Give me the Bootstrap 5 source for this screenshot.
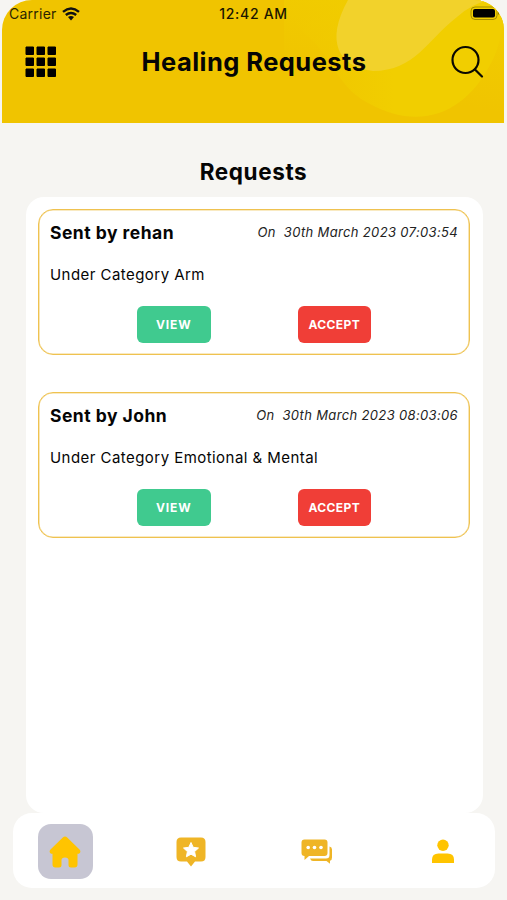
<!DOCTYPE html>
<html lang="en">
<head>
<meta charset="utf-8">
<meta name="viewport" content="width=device-width, initial-scale=1">
<title>Healing Requests</title>
<link href="https://cdn.jsdelivr.net/npm/bootstrap@5.3.0/dist/css/bootstrap.min.css" rel="stylesheet">
<style>
body{background:#f6f5f2;font-family:Inter,"Liberation Sans",sans-serif;color:#050505}
svg{display:block;flex:none}
.phone{width:507px;height:900px}
.app-header{height:123px;margin:0 3px 0 2px;background:#f0c400;border-radius:30px 30px 0 0}
.header-art{inset:0}
.status{height:27px;font-size:14px;padding:0 0 0 7px}
.status-side{width:120px;gap:5px}
.status-end{width:126px}
.carrier{font-size:14px;letter-spacing:.25px;color:#2b2400}
.clock{font-weight:500;letter-spacing:.7px;font-size:14px;color:#1a1600}
.title-bar{height:70px;padding:0 20px 0 23px}
.app-title{font-size:25.5px;font-weight:700;letter-spacing:.45px;line-height:30px}
.section-title{font-size:22.5px;font-weight:700;line-height:30px;letter-spacing:.6px;margin-top:34px;margin-bottom:10px}
.panel{margin:0 24px 0 26px;height:616px;border-radius:18px;padding:12px 13px 0 12px;gap:37px;background:#fff}
.request{height:146px;border:1px solid #efc250;box-shadow:inset 0 0 0 .6px #f3d585;border-radius:15px;padding:8px 11px 0 11px;background:#fff}
.sender{font-size:17.5px;font-weight:700;line-height:29px;letter-spacing:.48px}
.when{font-size:13px;font-style:italic;line-height:28px;white-space:pre;color:#222;letter-spacing:.35px}
.category{font-size:15px;line-height:24px;margin-top:16px;letter-spacing:.45px}
.actions{margin-top:19px;gap:87px;padding-left:87px}
.action{width:73.5px;height:37px;border-radius:6px;border:0;padding:0;font-size:12px;font-weight:700;color:#fff;letter-spacing:.4px}
.view{background:#40ca8f;letter-spacing:.8px}.accept{background:#f03e37}
.tabs{height:75px;margin:0 12px 0 13px;border-radius:19px;background:#fff;padding:2px 25px 0;gap:71px}
.tab{width:55px;height:55px}
.tab-home{border-radius:13px;background:#c7c6d3}
</style>
</head>
<body>
<div class="phone d-flex flex-column overflow-hidden">
<header class="app-header position-relative overflow-hidden">
<svg class="header-art position-absolute" width="502" height="123" viewBox="2 0 502 123">
<defs>
<linearGradient id="base" x1=".6" y1="1" x2="1" y2="0"><stop offset=".2" stop-color="#f0c400"/><stop offset="1" stop-color="#f1cf00"/></linearGradient>
<linearGradient id="disc" x1="0" y1="0" x2=".5" y2="0"><stop offset="0" stop-color="#f0c900" stop-opacity=".2"/><stop offset="1" stop-color="#f1ce00"/></linearGradient>
</defs>
<path d="M284 0H504V123H284Z" fill="url(#base)"/>
<path d="M284 0C289 25 309 33 324 54C340 77 346 91 368 103C424 134 467 109 490 65C505 41 504 0 504 0Z" fill="url(#disc)"/>
<path d="M348 0C325 41 338 67 373 71C415 71 427 40 457 17Q471 4 490 0Z" fill="#f2d22b"/>
</svg>
<div class="status position-relative d-flex justify-content-between align-items-center">
<div class="status-side d-flex align-items-center carrier"><span>Carrier</span>
<svg width="18" height="14" viewBox="0 0 18 14"><g fill="none" stroke="#111" stroke-width="2.4"><path d="M1 4.8Q9-2 17 4.8M3.8 8Q9 3.8 14.2 8"/></g><path d="M6 10Q9 8 12 10L9 13.4Z" fill="#111"/></svg></div>
<span class="clock">12:42 AM</span>
<div class="status-end d-flex justify-content-end pe-1"><svg width="30" height="15" viewBox="0 0 30 15"><rect x="1" y="1" width="26" height="12.5" rx="4" fill="none" stroke="#a48d00"/><rect x="3" y="3" width="22" height="8.5" rx="2"/><path d="M28 5Q30.500 7 28 9Z" fill="#887500"/></svg></div>
</div>
<div class="title-bar position-relative d-flex justify-content-between align-items-center">
<svg width="32" height="32" viewBox="0 0 32 32"><path d="M1 1h7.500v7.500H1zM12 1h7.500v7.500h-7.500zM23 1h7.500v7.500h-7.500zM1 12h7.500v7.500H1zM12 12h7.500v7.500h-7.500zM23 12h7.500v7.500h-7.500zM1 23h7.500v7.500H1zM12 23h7.500v7.500h-7.500zM23 23h7.500v7.500h-7.500z" stroke="#000" stroke-linejoin="round"/></svg>
<h1 class="app-title m-0">Healing Requests</h1>
<svg width="33" height="34" viewBox="0 0 33 34" fill="none" stroke="#0b0900" stroke-width="2.2" stroke-linecap="round"><circle cx="14.500" cy="15" r="13"/><path d="M24 24.500L31 31.500"/></svg>
</div>
</header>
<h2 class="section-title text-center">Requests</h2>
<main class="panel d-flex flex-column">
<article class="request"><div class="d-flex justify-content-between"><span class="sender">Sent by rehan</span><span class="when">On  30th March 2023 07:03:54</span></div><div class="category">Under Category Arm</div><div class="actions d-flex"><button class="btn action view">VIEW</button><button class="btn action accept">ACCEPT</button></div></article>
<article class="request"><div class="d-flex justify-content-between"><span class="sender">Sent by John</span><span class="when">On  30th March 2023 08:03:06</span></div><div class="category">Under Category Emotional &amp; Mental</div><div class="actions d-flex"><button class="btn action view">VIEW</button><button class="btn action accept">ACCEPT</button></div></article>
</main>
<nav class="tabs d-flex align-items-center">
<a href="#" class="tab tab-home d-flex align-items-center justify-content-center" aria-label="Home"><svg width="32" height="32" viewBox="0 0 32 32"><path d="M13.800 1.500Q16-.6 18.200 1.500L30.500 13.500Q32.500 16 30 17.800H28.500V28.500Q28.500 31.500 25.500 31.500H22Q19.500 31.500 19.500 29V24Q19.500 21.500 16 21.500T12.500 24V29Q12.500 31.500 10 31.500H6.500Q3.500 31.500 3.500 28.500V17.800H2Q-.5 16 1.500 13.500Z" fill="#ffc400"/></svg></a>
<a href="#" class="tab d-flex align-items-center justify-content-center" aria-label="Reviews"><svg width="30" height="30" viewBox="0 0 30 30"><path d="M5 .5H25Q29.500 .5 29.500 5V20Q29.500 24.500 25 24.500H19L15 29.500L11 24.500H5Q.5 24.500 .5 20V5Q.5 .5 5 .5Z" fill="#efb526"/><path d="M15 5.500L17.200 10.300L22.500 11L18.600 14.600L19.600 19.800L15 17.200L10.400 19.800L11.400 14.600L7.500 11L12.800 10.300Z" fill="#fff" stroke="#fff" stroke-linejoin="round"/></svg></a>
<a href="#" class="tab d-flex align-items-center justify-content-center" aria-label="Messages"><svg width="31" height="25" viewBox="0 0 31 25"><path d="M3.500 .5H23.500Q26.500 .5 26.500 3.500V14Q26.500 17 23.500 17H8L3.500 21V17Q.5 17 .5 14V3.500Q.5 .5 3.500 .5Z" fill="#efb526"/><g fill="#fff"><circle cx="7.200" cy="8.500" r="1.800"/><circle cx="13.500" cy="8.500" r="1.800"/><circle cx="20" cy="8.500" r="1.800"/></g><path d="M28.500 7.500Q31 8 31 10.500V18.500Q31 21.500 29 21.800V24.800L25.500 22H12Q10 22 9 19.500H25Q28.500 19.500 28.500 16Z" fill="#efb526"/></svg></a>
<a href="#" class="tab d-flex align-items-center justify-content-center" aria-label="Profile"><svg width="22" height="25" viewBox="0 0 22 25"><circle cx="11" cy="6.300" r="5.700" fill="#ffc400"/><path d="M0 24V20.500Q0 14.500 6.500 14.500H15.500Q22 14.500 22 20.500V24Z" fill="#ffc400"/></svg></a>
</nav>
</div>
<script src="https://cdn.jsdelivr.net/npm/bootstrap@5.3.0/dist/js/bootstrap.bundle.min.js"></script>
</body>
</html>
